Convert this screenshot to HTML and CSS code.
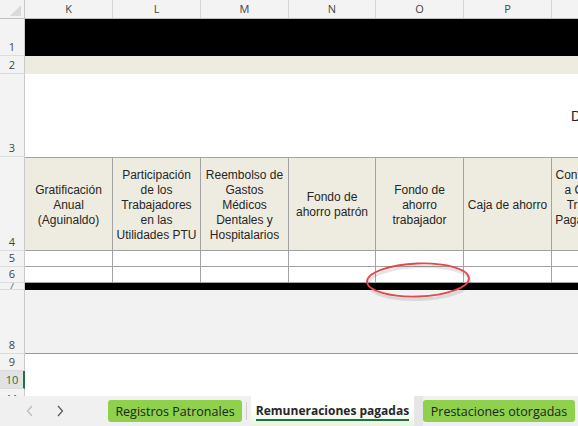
FILE: index.html
```html
<!DOCTYPE html>
<html lang="es">
<head>
<meta charset="utf-8">
<title>Remuneraciones pagadas</title>
<link rel="stylesheet" href="styles.css">
</head>
<body>
<div class="app">
  <div class="sheet">
    <div class="row colhdr">
      <div class="corner"><span class="tri"></span></div>
      <div class="col w88">K</div>
      <div class="col w88">L</div>
      <div class="col w88">M</div>
      <div class="col w87">N</div>
      <div class="col w88">O</div>
      <div class="col w88">P</div>
      <div class="col w88">Q</div>
    </div>
    <div class="row r1"><div class="rh">1</div><div class="fill black"></div></div>
    <div class="row r2"><div class="rh">2</div><div class="fill beige"></div></div>
    <div class="row r3"><div class="rh">3</div><div class="fill title"><span>Datos de las remuneraciones</span></div></div>
    <div class="row r4">
      <div class="rh">4</div>
      <div class="cells">
        <div class="cell hdr w88">Gratificación<br>Anual<br>(Aguinaldo)</div>
        <div class="cell hdr w88">Participación<br>de los<br>Trabajadores<br>en las<br>Utilidades PTU</div>
        <div class="cell hdr w88">Reembolso de<br>Gastos<br>Médicos<br>Dentales y<br>Hospitalarios</div>
        <div class="cell hdr w87">Fondo de<br>ahorro patrón</div>
        <div class="cell hdr w88">Fondo de<br>ahorro<br>trabajador</div>
        <div class="cell hdr w88">Caja de ahorro</div>
        <div class="cell hdr w88">Contribuciones<br>a Cargo del<br>Trabajador<br>Pagadas por el<br>Patrón</div>
      </div>
    </div>
    <div class="row r5">
      <div class="rh">5</div>
      <div class="cells">
        <div class="cell data w88"></div><div class="cell data w88"></div><div class="cell data w88"></div><div class="cell data w87"></div><div class="cell data w88"></div><div class="cell data w88"></div><div class="cell data w88"></div>
      </div>
    </div>
    <div class="row r6">
      <div class="rh">6</div>
      <div class="cells">
        <div class="cell data w88"></div><div class="cell data w88"></div><div class="cell data w88"></div><div class="cell data w87"></div><div class="cell data w88"></div><div class="cell data w88"></div><div class="cell data w88"></div>
      </div>
    </div>
    <div class="row r7"><div class="rh tiny"><span>7</span></div><div class="fill black"></div></div>
    <div class="row r8"><div class="rh">8</div><div class="fill gray"></div></div>
    <div class="row r9"><div class="rh">9</div><div class="fill"></div></div>
    <div class="row r10"><div class="rh sel">10</div><div class="fill"></div></div>
    <div class="row r11"><div class="rh top">11</div><div class="fill"></div></div>

    <svg class="mark" width="116" height="48" viewBox="0 0 116 48">
      <ellipse cx="57" cy="25" rx="51" ry="16.5" fill="none" stroke="rgba(0,0,0,0.10)" stroke-width="3" transform="rotate(-2 57 25)"/>
      <ellipse cx="56" cy="22" rx="51" ry="16.5" fill="none" stroke="#e6464c" stroke-width="1.8" transform="rotate(-2 56 22)"/>
    </svg>
  </div>

  <div class="tabbar">
    <div class="nav">
      <svg class="arrow off" width="8" height="12" viewBox="0 0 8 12"><polyline points="6,1 1.5,6 6,11" fill="none" stroke="currentColor" stroke-width="1.2"/></svg>
      <svg class="arrow" width="8" height="12" viewBox="0 0 8 12"><polyline points="2,1 6.5,6 2,11" fill="none" stroke="currentColor" stroke-width="1.2"/></svg>
    </div>
    <div class="tab green t1">Registros Patronales</div>
    <div class="sep"></div>
    <div class="tab active"><span>Remuneraciones pagadas</span></div>
    <div class="gap"></div>
    <div class="tab green t3">Prestaciones otorgadas</div>
  </div>
</div>
</body>
</html>
```

FILE: styles.css
```css
* { box-sizing: border-box; }
html, body { margin: 0; padding: 0; background: #ffffff; }
body { width: 578px; height: 426px; overflow: hidden; }

.app { display: flex; flex-direction: column; width: 578px; height: 426px; }

.sheet {
  position: relative;
  height: 396px;
  display: flex;
  flex-direction: column;
  overflow: hidden;
  background: #ffffff;
}

.row { display: flex; flex: none; overflow: hidden; }

/* column header */
.colhdr { height: 19px; background: #f3f3f3; border-bottom: 1px solid #bdbdbd; }
.corner {
  width: 25px; flex: none;
  border-right: 1px solid #c9c9c9;
  display: flex; align-items: flex-end; justify-content: flex-end;
  padding: 0 3px 2px 0;
}
.tri {
  width: 0; height: 0;
  border-left: 11px solid transparent;
  border-bottom: 11px solid #dadada;
}
.col {
  flex: none;
  border-right: 1px solid #d6d6d6;
  font: 11px "Open Sans", "Noto Sans", sans-serif;
  color: #444;
  text-align: center;
  line-height: 18px;
}
.w88 { width: 88px; }
.w87 { width: 87px; }

/* row header */
.rh {
  width: 25px; flex: none;
  background: #f3f3f3;
  border-right: 1px solid #c9c9c9;
  border-bottom: 1px solid #dcdcdc;
  font: 11px "Open Sans", "Noto Sans", sans-serif;
  color: #444;
  display: flex; align-items: flex-end; justify-content: center;
  line-height: 14px;
  padding-bottom: 1px;
  overflow: hidden;
}
.rh.sel {
  background: #e2e2e2;
  color: #1e7145;
  border-right: 2px solid #1e7145;
  padding-left: 1px;
}
.rh.tiny { align-items: flex-end; padding: 0; color: #777; }
.rh.tiny span { display: block; height: 14px; line-height: 14px; flex: none; margin-bottom: -3px; }
.rh.top { align-items: flex-start; padding: 4px 0 0 0; line-height: 12px; border-bottom: none; }

.fill { flex: 1; }
.black { background: #000000; }
.beige { background: #eeece1; }
.gray { background: #f2f2f2; border-bottom: 1px solid #9a9a9a; }

.r1 { height: 37px; }
.r2 { height: 18px; }
.r3 { height: 83px; }
.r4 { height: 94px; }
.r5 { height: 16px; }
.r6 { height: 16px; }
.r7 { height: 7px; }
.r8 { height: 64px; }
.r9 { height: 17px; }
.r10 { height: 18px; }
.r11 { flex: 1; }

.title {
  display: flex; align-items: center;
  padding-left: 546px;
  white-space: nowrap;
  font: 14px "Liberation Sans", Arial, sans-serif;
  color: #222;
}

.cells { display: flex; flex: 1; }
.cell { flex: none; border-right: 1px solid #a3a3a3; }
.hdr {
  background: #eeece1;
  border-top: 1px solid #a3a3a3;
  border-bottom: 1px solid #a3a3a3;
  display: flex; align-items: center; justify-content: center;
  text-align: center;
  white-space: nowrap;
  font: 12px "Liberation Sans", Arial, sans-serif;
  line-height: 15px;
  color: #262626;
  padding-top: 2px;
}
.data { background: #ffffff; border-bottom: 1px solid #a3a3a3; }

.mark { position: absolute; left: 362px; top: 258px; }

/* sheet tabs */
.tabbar {
  height: 30px; flex: none;
  background: #f0f0f0;
  display: flex; align-items: center;
}
.nav {
  width: 108px; flex: none;
  display: flex; align-items: center;
  padding-left: 26px; gap: 22px;
}
.arrow { color: #555; }
.arrow.off { color: #b9b9b9; }

.tab {
  flex: none;
  display: flex; align-items: center; justify-content: center;
  font: 12.5px "Open Sans", "Noto Sans", sans-serif;
  color: #222;
  white-space: nowrap;
}
.green { height: 22px; background: #8fd04d; border-radius: 3px; }
.t1 { width: 134px; }
.t3 { width: 152px; }
.sep { width: 1px; height: 18px; background: #cfcfcf; margin: 0 4px 0 4px; flex: none; }
.active {
  width: 163px; align-self: stretch;
  background: linear-gradient(#ffffff 0%, #ffffff 45%, #e9f5dc 100%);
  font-size: 12px;
  font-weight: 700;
  color: #262626;
  padding-top: 1px;
}
.active span { border-bottom: 2px solid #1e7145; line-height: 16px; }
.gap { width: 9px; align-self: stretch; background: #e6e6e6; flex: none; }
```
